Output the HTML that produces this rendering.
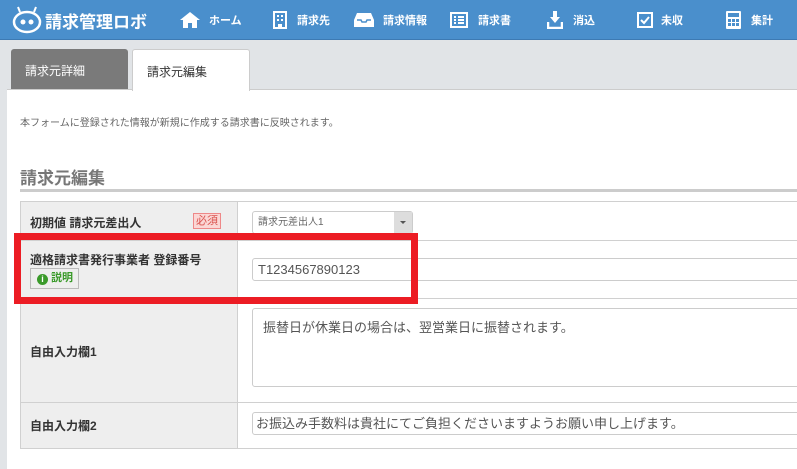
<!DOCTYPE html>
<html><head><meta charset="utf-8"><style>
*{margin:0;padding:0;box-sizing:border-box}
body{width:797px;height:461px;overflow:hidden;background:#e1e4e7;font-family:"Liberation Sans","Noto Sans CJK JP",sans-serif;position:relative;color:#333}
.hdr{position:absolute;left:0;top:0;width:797px;height:40px;background:#4a8fcc;border-bottom:1px solid #3d7ab3}
.hdr .t{position:absolute;top:12px;color:#fff;font-size:11px;font-weight:bold}
.ic{position:absolute;top:11px}
.logo{position:absolute;left:45px;top:8px;color:#fff;font-size:17px;font-weight:bold}
.tab{position:absolute;top:49px;height:41px;font-size:12px;padding:13px 0 0 14px}
.panel{position:absolute;left:7px;top:89px;width:800px;height:380px;background:#fff;border-top:1px solid #ccc}
.abs{position:absolute}
.lbl{position:absolute;left:20px;width:217px;background:#eee;font-size:12px;font-weight:bold;color:#333}
.row{position:absolute;left:20px;width:790px;border-top:1px solid #d0d0d0}
.inp{position:absolute;left:252px;border:1px solid #ccc;border-radius:3px;background:#fff;font-size:13px;color:#555;padding:0 5px}
</style></head><body>
<div class="hdr">
<svg class="ic" style="left:12px;top:6px" width="30" height="28" viewBox="0 0 30 28"><line x1="8" y1="6" x2="6" y2="1" stroke="#fff" stroke-width="2"/><line x1="22" y1="6" x2="24" y2="1" stroke="#fff" stroke-width="2"/><ellipse cx="15" cy="16" rx="13" ry="10" fill="none" stroke="#fff" stroke-width="2.5"/><circle cx="11" cy="16" r="2.5" fill="#fff"/><circle cx="19" cy="16" r="2.5" fill="#fff"/></svg>
<div class="logo">請求管理ロボ</div>
<svg class="ic" style="left:180px;top:12px" width="20" height="16" viewBox="0 0 20 16"><path d="M10 0L0 8h3v8h5v-5h4v5h5V8h3z" fill="#fff"/></svg><span class="t" style="left:209px">ホーム</span>
<svg class="ic" style="left:273px" width="14" height="18" viewBox="0 0 14 18"><rect x="1" y="1" width="12" height="16" fill="none" stroke="#fff" stroke-width="2"/><path d="M4 4h2v2H4zM8 4h2v2H8zM4 8h2v2H4zM8 8h2v2H8zM5 13h4v4H5z" fill="#fff"/></svg><span class="t" style="left:297px">請求先</span>
<svg class="ic" style="left:354px;top:13px" width="20" height="14" viewBox="0 0 20 14"><path d="M3 0h14l3 7v7H0V7z" fill="#fff"/><path d="M3 7h4l1 2h4l1-2h4" stroke="#4a8fcc" stroke-width="1.5" fill="none"/></svg><span class="t" style="left:383px">請求情報</span>
<svg class="ic" style="left:450px;top:12px" width="18" height="16" viewBox="0 0 18 16"><rect x="1" y="1" width="16" height="14" fill="none" stroke="#fff" stroke-width="2"/><path d="M4 4h2v2H4zM8 4h6v2H8zM4 7h2v2H4zM8 7h6v2H8zM4 10h2v2H4zM8 10h6v2H8z" fill="#fff"/></svg><span class="t" style="left:478px">請求書</span>
<svg class="ic" style="left:547px" width="16" height="18" viewBox="0 0 16 18"><path d="M6 0h4v6h3l-5 6-5-6h3z" fill="#fff"/><path d="M1 11v6h14v-6" fill="none" stroke="#fff" stroke-width="2.5"/></svg><span class="t" style="left:573px">消込</span>
<svg class="ic" style="left:637px;top:12px" width="16" height="16" viewBox="0 0 16 16"><rect x="1" y="1" width="14" height="14" fill="none" stroke="#fff" stroke-width="2"/><path d="M4 8l3 3 5-6" fill="none" stroke="#fff" stroke-width="2"/></svg><span class="t" style="left:661px">未収</span>
<svg class="ic" style="left:726px" width="15" height="18" viewBox="0 0 15 18"><rect x="0" y="0" width="15" height="18" rx="1" fill="#fff"/><rect x="2" y="2" width="11" height="4" fill="#4a8fcc"/><path d="M2 8h3v3H2zM6 8h3v3H6zM10 8h3v3h-3zM2 12h3v3H2zM6 12h3v3H6zM10 12h3v3h-3z" fill="#4a8fcc"/></svg><span class="t" style="left:751px">集計</span>
</div>
<div class="tab" style="left:11px;width:117px;background:#7a7a7a;color:#fff;border-radius:3px 3px 0 0">請求元詳細</div>
<div class="tab" style="left:132px;width:118px;background:#fff;border:1px solid #ccc;border-bottom:none;border-radius:3px 3px 0 0;z-index:2;height:42px">請求元編集</div>
<div class="panel"></div>
<div class="abs" style="left:20px;top:114px;font-size:10px;color:#666">本フォームに登録された情報が新規に作成する請求書に反映されます。</div>
<div class="abs" style="left:20px;top:164px;font-size:17px;font-weight:bold;color:#777">請求元編集</div>
<div class="abs" style="left:20px;top:189px;width:790px;height:3px;background:#ccc"></div>
<div class="lbl" style="top:201px;height:247px;border-left:1px solid #d0d0d0"></div>
<div class="row" style="top:201px"></div><div class="row" style="top:240px"></div><div class="row" style="top:298px"></div><div class="row" style="top:402px"></div><div class="row" style="top:448px"></div>
<div class="abs" style="left:237px;top:201px;width:1px;height:247px;background:#d0d0d0"></div>
<div class="abs" style="left:30px;top:214px;font-size:12px;font-weight:bold">初期値 請求元差出人</div>
<div class="abs" style="left:193px;top:213px;font-size:11px;color:#d9534f;background:#fbd7d5;border:1px solid #e88;padding:0 2px;line-height:14px">必須</div>
<div class="inp" style="top:211px;width:161px;height:23px;font-size:10px;line-height:21px;color:#666">請求元差出人1<div style="position:absolute;right:0;top:0;width:18px;height:21px;background:#ddd"><div style="position:absolute;left:6px;top:9px;border:3px solid transparent;border-top:3px solid #555"></div></div></div>
<div class="abs" style="left:30px;top:251px;font-size:12px;font-weight:bold">適格請求書発行事業者 登録番号</div>
<div class="abs" style="left:30px;top:268px;width:49px;height:21px;border:1px solid #bbb;font-size:11px;font-weight:bold;color:#3a9a2a;line-height:19px;padding-left:6px"><span style="display:inline-block;width:11px;height:11px;border-radius:50%;background:#3a9a2a;color:#fff;font-size:9px;line-height:11px;text-align:center;vertical-align:-1px">i</span> 説明</div>
<div class="inp" style="top:258px;width:560px;height:23px;line-height:21px">T1234567890123</div>
<div class="abs" style="left:14px;top:233px;width:404px;height:71px;border:7px solid #ec1c24"></div>
<div class="abs" style="left:30px;top:343px;font-size:12px;font-weight:bold">自由入力欄1</div>
<div class="inp" style="top:308px;width:560px;height:79px;padding-top:8px;padding-left:10px">振替日が休業日の場合は、翌営業日に振替されます。</div>
<div class="abs" style="left:30px;top:417px;font-size:12px;font-weight:bold">自由入力欄2</div>
<div class="inp" style="top:412px;width:560px;height:23px;line-height:21px;padding-left:3px">お振込み手数料は貴社にてご負担くださいますようお願い申し上げます。</div>
</body></html>
